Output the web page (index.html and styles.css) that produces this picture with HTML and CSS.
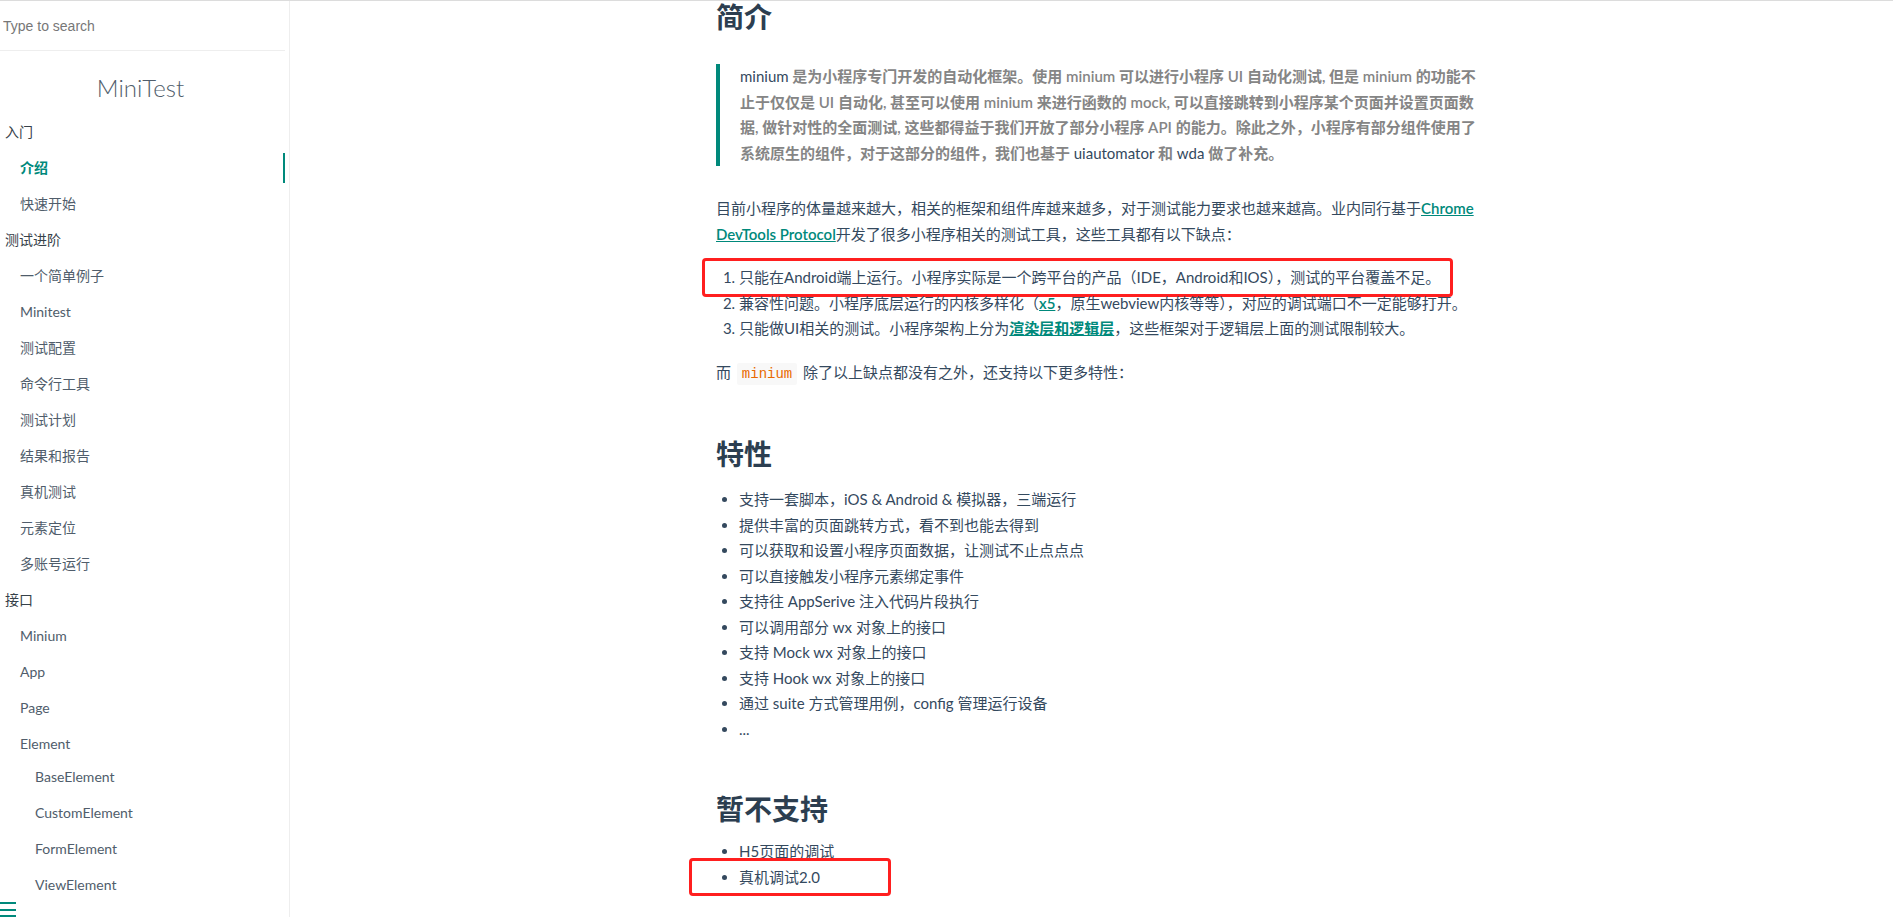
FILE: index.html
```html
<!doctype html>
<html>
<head>
  <meta charset="utf-8">
  <title>MiniTest</title>
  <link rel="stylesheet" href="styles.css">
</head>
<body>

<aside class="sidebar">
  <div class="search">
    <input type="search" placeholder="Type to search">
  </div>
  <h1 class="app-name">MiniTest</h1>

  <nav class="sidebar-nav">
    <ul>
      <li><p>入门</p>
        <ul>
          <li class="active"><a href="#">介绍</a></li>
          <li><a href="#">快速开始</a></li>
        </ul>
      </li>
      <li><p>测试进阶</p>
        <ul>
          <li><a href="#">一个简单例子</a></li>
          <li><a href="#">Minitest</a></li>
          <li><a href="#">测试配置</a></li>
          <li><a href="#">命令行工具</a></li>
          <li><a href="#">测试计划</a></li>
          <li><a href="#">结果和报告</a></li>
          <li><a href="#">真机测试</a></li>
          <li><a href="#">元素定位</a></li>
          <li><a href="#">多账号运行</a></li>
        </ul>
      </li>
      <li><p>接口</p>
        <ul>
          <li><a href="#">Minium</a></li>
          <li><a href="#">App</a></li>
          <li><a href="#">Page</a></li>
          <li><a href="#">Element</a>
            <ul>
              <li><a href="#">BaseElement</a></li>
              <li><a href="#">CustomElement</a></li>
              <li><a href="#">FormElement</a></li>
              <li><a href="#">ViewElement</a></li>
              <li><a href="#">Native</a></li>
            </ul>
          </li>
        </ul>
      </li>
    </ul>
  </nav>

  <!-- toggle sits over the bottom of the nav -->
  <button class="sidebar-toggle" aria-label="toggle sidebar">
    <span></span><span></span><span></span>
  </button>
</aside>

<main class="content">
  <article class="markdown-section">
    <h2 class="first">简介</h2>

    <blockquote>
      <p><span class="plain">minium</span> 是为小程序专门开发的自动化框架。使用 minium 可以进行小程序 UI 自动化测试, 但是 minium 的功能不止于仅仅是 UI 自动化, 甚至可以使用 minium 来进行函数的 mock, 可以直接跳转到小程序某个页面并设置页面数据, 做针对性的全面测试, 这些都得益于我们开放了部分小程序 API 的能力。除此之外，小程序有部分组件使用了系统原生的组件，对于这部分的组件，我们也基于 <span class="plain">uiautomator</span> 和 <span class="plain">wda</span> 做了补充。</p>
    </blockquote>

    <p>目前小程序的体量越来越大，相关的框架和组件库越来越多，对于测试能力要求也越来越高。业内同行基于<a href="#">Chrome DevTools Protocol</a>开发了很多小程序相关的测试工具，这些工具都有以下缺点：</p>

    <ol>
      <li class="marked">只能在Android端上运行。小程序实际是一个跨平台的产品（IDE，Android和IOS），测试的平台覆盖不足。</li>
      <li>兼容性问题。小程序底层运行的内核多样化（<a href="#">x5</a>，原生webview内核等等），对应的调试端口不一定能够打开。</li>
      <li>只能做UI相关的测试。小程序架构上分为<a href="#">渲染层和逻辑层</a>，这些框架对于逻辑层上面的测试限制较大。</li>
    </ol>

    <p>而 <code>minium</code> 除了以上缺点都没有之外，还支持以下更多特性：</p>

    <h2>特性</h2>
    <ul>
      <li>支持一套脚本，iOS &amp; Android &amp; 模拟器，三端运行</li>
      <li>提供丰富的页面跳转方式，看不到也能去得到</li>
      <li>可以获取和设置小程序页面数据，让测试不止点点点</li>
      <li>可以直接触发小程序元素绑定事件</li>
      <li>支持往 AppSerive 注入代码片段执行</li>
      <li>可以调用部分 wx 对象上的接口</li>
      <li>支持 Mock wx 对象上的接口</li>
      <li>支持 Hook wx 对象上的接口</li>
      <li>通过 suite 方式管理用例，config 管理运行设备</li>
      <li>...</li>
    </ul>

    <h2 class="tight">暂不支持</h2>
    <ul class="tight">
      <li>H5页面的调试</li>
      <li class="marked small">真机调试2.0</li>
    </ul>
  </article>
</main>

</body>
</html>
```

FILE: styles.css
```css
* {
  box-sizing: border-box;
}

body {
  margin: 0;
  height: 100vh;
  overflow: hidden;
  display: flex;
  border-top: 1px solid #dcdcdc;
  background: #fff;
  font-family: Lato, "Noto Sans CJK SC", sans-serif;
  font-size: 15px;
  color: #34495e;
}

/* sidebar */

.sidebar {
  position: relative;
  width: 290px;
  flex-shrink: 0;
  border-right: 1px solid #eee;
  overflow: hidden;
  color: #505d6b;
}

.search {
  height: 50px;
  margin-right: 4px;
  border-bottom: 1px solid #eee;
  display: flex;
  align-items: center;
}

.search input {
  border: none;
  outline: none;
  width: 100%;
  padding: 0 3px;
  font-family: "Liberation Sans", Arial, sans-serif;
  font-size: 14px;
  color: #333;
  background: transparent;
}

.search input::placeholder {
  color: #777;
}

.app-name {
  margin: 19px 8px 8px 0;
  font-size: 24px;
  font-weight: 300;
  line-height: 36px;
  text-align: center;
  color: #505d6b;
}

.sidebar-nav {
  width: 285px;
  font-size: 14px;
}

.sidebar-nav ul {
  list-style: none;
  margin: 0;
  padding: 0;
}

.sidebar-nav p {
  margin: 0;
  padding-left: 5px;
  line-height: 36px;
  color: #364149;
}

.sidebar-nav ul ul {
  padding-left: 20px;
}

.sidebar-nav ul ul ul {
  padding-left: 15px;
}

.sidebar-nav ul ul li {
  padding: 3px 0;
}

.sidebar-nav ul ul a {
  display: block;
  line-height: 30px;
  color: #505d6b;
  text-decoration: none;
}

.sidebar-nav li.active > a {
  color: #00897b;
  font-weight: 700;
  border-right: 2px solid #00897b;
}

.sidebar-toggle {
  position: absolute;
  left: 0;
  bottom: 0;
  width: 284px;
  height: 23px;
  padding: 8px 0 0;
  border: none;
  background: #fff;
  display: flex;
  flex-direction: column;
  gap: 4.5px;
  cursor: pointer;
}

.sidebar-toggle span {
  display: block;
  width: 16px;
  height: 2px;
  background: #00897b;
}

/* main content */

.content {
  flex: 1;
  padding-left: 426px;
  overflow: hidden;
}

.markdown-section {
  width: 770px;
  line-height: 25.5px;
}

.markdown-section h2 {
  margin: 50px 0 16px;
  font-size: 28px;
  line-height: 34px;
  font-weight: 700;
  color: #2c3e50;
}

.markdown-section h2.first {
  margin-top: -1px;
}

.markdown-section h2.tight {
  margin-bottom: 13px;
}

.markdown-section p {
  margin: 18px 0;
}

.markdown-section a {
  color: #00897b;
  font-weight: 600;
}

blockquote {
  margin: 30px 0;
  padding-left: 20px;
  border-left: 4px solid #00897b;
  color: #858585;
}

.markdown-section blockquote p {
  margin: 0;
  font-weight: 600;
}

blockquote .plain {
  color: #34495e;
  font-weight: 400;
}

.markdown-section ol,
.markdown-section ul {
  margin: 16px 0;
  padding-left: 23px;
}

.markdown-section ul.tight {
  margin-top: 13px;
}

.markdown-section li {
  position: relative;
}

code {
  margin: 0 2px;
  padding: 3px 5px;
  border-radius: 2px;
  background: #f8f8f8;
  color: #e96900;
  font-family: "Liberation Mono", "DejaVu Sans Mono", monospace;
  font-size: 14px;
}

/* red annotation boxes drawn over the screenshot */
li.marked::after {
  content: "";
  position: absolute;
  left: -37px;
  top: -7px;
  width: 745px;
  height: 33px;
  border: 3px solid #ff1f1f;
  border-radius: 4px;
}

li.marked.small::after {
  left: -50px;
  top: -7px;
  width: 196px;
  height: 32px;
}
```
